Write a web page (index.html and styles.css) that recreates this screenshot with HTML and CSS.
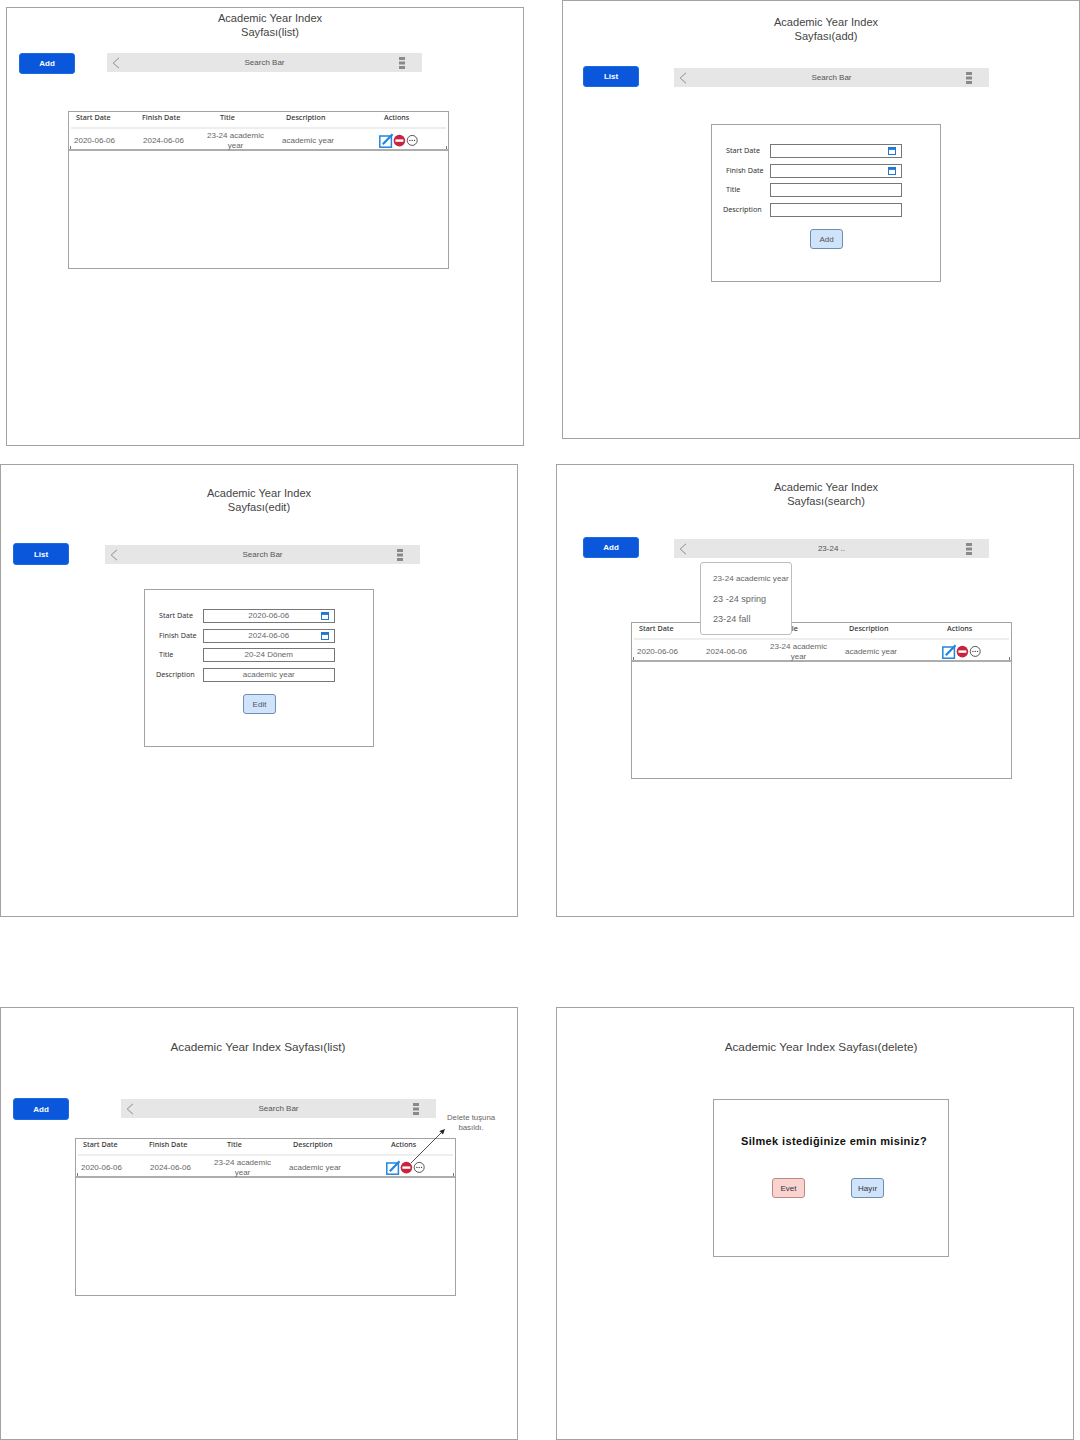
FILE: index.html
```html
<!DOCTYPE html>
<html lang="en">
<head>
    <meta charset="UTF-8">
    <meta name="viewport" content="width=device-width, initial-scale=1.0">
    <title>Academic Year Index</title>
    <link rel="stylesheet" href="styles.css">
</head>
<body>

    <svg class="sprites" width="0" height="0">
        <symbol id="icon-actions" viewBox="0 0 40 15">
            <rect x="0.8" y="3" width="11.6" height="11.2" fill="#fff" stroke="#1f86e0" stroke-width="1.5"/>
            <path d="M3.8 11.2 L13.6 1.2" stroke="#1f86e0" stroke-width="2.2" fill="none"/>
            <circle cx="20.4" cy="7.6" r="5.8" fill="#c9243f"/>
            <rect x="16.4" y="6.4" width="8" height="2.4" fill="#fff"/>
            <circle cx="33.2" cy="7.4" r="5" fill="#fff" stroke="#444" stroke-width="0.9"/>
            <circle cx="30.9" cy="7.4" r="0.7" fill="#444"/>
            <circle cx="33.2" cy="7.4" r="0.7" fill="#444"/>
            <circle cx="35.5" cy="7.4" r="0.7" fill="#444"/>
        </symbol>
        <symbol id="icon-calendar" viewBox="0 0 8 8">
            <rect x="0.5" y="0.5" width="7" height="7" fill="#fff" stroke="#1f78d8"/>
            <rect x="0.5" y="0.5" width="7" height="2.4" fill="#1f78d8"/>
        </symbol>
        <symbol id="icon-back" viewBox="0 0 8 12">
            <path d="M7 0.8 L1.2 6 L7 11.2" fill="none" stroke="#8c8c8c" stroke-width="1"/>
        </symbol>
        <symbol id="icon-kebab" viewBox="0 0 6 12">
            <rect width="6" height="3" fill="#8a8a8a"/>
            <rect y="4.5" width="6" height="3" fill="#8a8a8a"/>
            <rect y="9" width="6" height="3" fill="#8a8a8a"/>
        </symbol>
    </svg>

    <div class="canvas">

        <section class="frame frame-list">
            <h2 class="title">Academic Year Index<br>Sayfası(list)</h2>
            <div class="toolbar">
                <button class="btn-main">Add</button>
                <div class="search-bar">
                    <svg class="icon-back"><use href="#icon-back"/></svg>
                    <span>Search Bar</span>
                    <svg class="icon-kebab"><use href="#icon-kebab"/></svg>
                </div>
            </div>
            <div class="panel table-panel">
                <div class="table-head">
                    <span>Start Date</span><span>Finish Date</span><span>Title</span><span>Description</span><span>Actions</span>
                </div>
                <div class="table-row">
                    <span>2020-06-06</span>
                    <span>2024-06-06</span>
                    <span class="cell-title">23-24 academic year</span>
                    <span>academic year</span>
                    <svg class="icon-actions"><use href="#icon-actions"/></svg>
                </div>
            </div>
        </section>

        <section class="frame frame-add">
            <h2 class="title">Academic Year Index<br>Sayfası(add)</h2>
            <div class="toolbar">
                <button class="btn-main">List</button>
                <div class="search-bar">
                    <svg class="icon-back"><use href="#icon-back"/></svg>
                    <span>Search Bar</span>
                    <svg class="icon-kebab"><use href="#icon-kebab"/></svg>
                </div>
            </div>
            <div class="panel form-panel">
                <div class="form-row">
                    <label>Start Date</label>
                    <div class="field"><svg class="icon-calendar"><use href="#icon-calendar"/></svg></div>
                </div>
                <div class="form-row">
                    <label>Finish Date</label>
                    <div class="field"><svg class="icon-calendar"><use href="#icon-calendar"/></svg></div>
                </div>
                <div class="form-row">
                    <label>Title</label>
                    <div class="field"></div>
                </div>
                <div class="form-row">
                    <label class="label-wide">Description</label>
                    <div class="field"></div>
                </div>
                <button class="btn-light form-btn">Add</button>
            </div>
        </section>

        <section class="frame frame-edit">
            <h2 class="title">Academic Year Index<br>Sayfası(edit)</h2>
            <div class="toolbar">
                <button class="btn-main">List</button>
                <div class="search-bar">
                    <svg class="icon-back"><use href="#icon-back"/></svg>
                    <span>Search Bar</span>
                    <svg class="icon-kebab"><use href="#icon-kebab"/></svg>
                </div>
            </div>
            <div class="panel form-panel">
                <div class="form-row">
                    <label>Start Date</label>
                    <div class="field">2020-06-06<svg class="icon-calendar"><use href="#icon-calendar"/></svg></div>
                </div>
                <div class="form-row">
                    <label>Finish Date</label>
                    <div class="field">2024-06-06<svg class="icon-calendar"><use href="#icon-calendar"/></svg></div>
                </div>
                <div class="form-row">
                    <label>Title</label>
                    <div class="field">20-24 Dönem</div>
                </div>
                <div class="form-row">
                    <label class="label-wide">Description</label>
                    <div class="field">academic year</div>
                </div>
                <button class="btn-light form-btn">Edit</button>
            </div>
        </section>

        <section class="frame frame-search">
            <h2 class="title">Academic Year Index<br>Sayfası(search)</h2>
            <div class="toolbar">
                <button class="btn-main">Add</button>
                <div class="search-bar">
                    <svg class="icon-back"><use href="#icon-back"/></svg>
                    <span>23-24 ..</span>
                    <svg class="icon-kebab"><use href="#icon-kebab"/></svg>
                </div>
            </div>
            <div class="panel table-panel">
                <div class="table-head">
                    <span>Start Date</span><span>Finish Date</span><span>Title</span><span>Description</span><span>Actions</span>
                </div>
                <div class="table-row">
                    <span>2020-06-06</span>
                    <span>2024-06-06</span>
                    <span class="cell-title">23-24 academic year</span>
                    <span>academic year</span>
                    <svg class="icon-actions"><use href="#icon-actions"/></svg>
                </div>
            </div>
            <ul class="dropdown">
                <li class="dropdown-first">23-24 academic year</li>
                <li>23 -24 spring</li>
                <li>23-24 fall</li>
            </ul>
        </section>

        <section class="frame frame-pressed">
            <h2 class="title">Academic Year Index Sayfası(list)</h2>
            <div class="toolbar">
                <button class="btn-main">Add</button>
                <div class="search-bar">
                    <svg class="icon-back"><use href="#icon-back"/></svg>
                    <span>Search Bar</span>
                    <svg class="icon-kebab"><use href="#icon-kebab"/></svg>
                </div>
            </div>
            <div class="panel table-panel">
                <div class="table-head">
                    <span>Start Date</span><span>Finish Date</span><span>Title</span><span>Description</span><span>Actions</span>
                </div>
                <div class="table-row">
                    <span>2020-06-06</span>
                    <span>2024-06-06</span>
                    <span class="cell-title">23-24 academic year</span>
                    <span>academic year</span>
                    <svg class="icon-actions"><use href="#icon-actions"/></svg>
                </div>
            </div>
            <p class="note">Delete tuşuna basıldı.</p>
            <svg class="note-arrow" width="40" height="40" viewBox="0 0 40 40">
                <path d="M1 36 L31 6" stroke="#222" stroke-width="0.8" fill="none"/>
                <path d="M35 2 L33 7.6 L29.4 4 Z" fill="#222"/>
            </svg>
        </section>

        <section class="frame frame-delete">
            <h2 class="title">Academic Year Index Sayfası(delete)</h2>
            <div class="panel dialog">
                <p class="dialog-text">Silmek istediğinize emin misiniz?</p>
                <div class="dialog-actions">
                    <button class="btn-light btn-red">Evet</button>
                    <button class="btn-light">Hayır</button>
                </div>
            </div>
        </section>

    </div>

</body>
</html>
```

FILE: styles.css
```css
* {
    box-sizing: border-box;
}

body {
    margin: 0;
    background-color: #fff;
    font-family: "Liberation Sans", Arial, sans-serif;
}

.sprites {
    position: absolute;
}

.canvas {
    position: relative;
    width: 1080px;
    height: 1440px;
    overflow: hidden;
}

/* the six wireframes sit freely on the canvas */
.frame {
    position: absolute;
    width: 518px;
    border: 1px solid #a3a3a3;
    background-color: #fff;
}

.frame-list { left: 6px; top: 7px; height: 439px; }
.frame-add { left: 562px; top: 0; height: 439px; }
.frame-edit { left: 0; top: 464px; height: 453px; }
.frame-search { left: 556px; top: 464px; height: 453px; }
.frame-pressed { left: 0; top: 1007px; height: 433px; }
.frame-delete { left: 556px; top: 1007px; height: 433px; }

.title {
    margin: 0;
    font-size: 11.1px;
    font-weight: 400;
    line-height: 14px;
    color: #444;
    text-align: center;
}

.frame-list .title { padding: 3px 0 0 10px; }
.frame-add .title { padding: 14px 0 0 10px; }
.frame-edit .title { padding: 21px 0 0; }
.frame-search .title { padding: 15px 0 0 22px; }
.frame-pressed .title { padding: 32px 2px 0 0; font-size: 11.75px; }
.frame-delete .title { padding: 32px 0 0 12px; font-size: 11.75px; }

.toolbar {
    display: flex;
    align-items: flex-start;
}

.frame-list .toolbar { margin-top: 14px; padding-left: 12px; gap: 32px; }
.frame-add .toolbar { margin-top: 23px; padding-left: 20px; gap: 35px; }
.frame-edit .toolbar { margin-top: 29px; padding-left: 12px; gap: 36px; }
.frame-search .toolbar { margin-top: 29px; padding-left: 26px; gap: 35px; }
.frame-pressed .toolbar { margin-top: 44px; padding-left: 12px; gap: 52px; }

.btn-main {
    width: 56px;
    height: 21px;
    padding: 0;
    border: 1px solid #1c6be0;
    border-radius: 3px;
    background-color: #0a57dc;
    color: #fff;
    font-family: inherit;
    font-size: 8px;
    font-weight: 700;
}

.frame-edit .btn-main,
.frame-pressed .btn-main {
    height: 22px;
}

.search-bar {
    display: grid;
    grid-template-columns: 1fr auto 1fr;
    align-items: center;
    width: 315px;
    height: 19px;
    margin-top: 2px;
    padding: 0 5px;
    background-color: #e6e6e6;
    color: #555;
    font-size: 8px;
}

.frame-list .search-bar { margin-top: 0; }
.frame-pressed .search-bar { margin-top: 1px; }

.icon-back {
    width: 8px;
    height: 12px;
}

.icon-kebab {
    justify-self: end;
    width: 6px;
    height: 12px;
    margin-right: 12px;
}

.panel {
    border: 1px solid #a3a3a3;
    background-color: #fff;
}

.table-panel {
    width: 381px;
    height: 158px;
}

.frame-list .table-panel { margin: 37px 0 0 61px; }
.frame-search .table-panel { margin: 64px 0 0 74px; height: 157px; }
.frame-pressed .table-panel { margin: 18px 0 0 74px; }

.table-head {
    display: grid;
    grid-template-columns: 66px 78px 66px 98px 50px;
    height: 17px;
    margin: 0 2px;
    padding-left: 5px;
    border-bottom: 2px solid #eeeeee;
    font-family: "Noto Sans", sans-serif;
    font-size: 7.2px;
    font-weight: 500;
    line-height: 11px;
    color: #333;
    white-space: nowrap;
}

.table-row {
    position: relative;
    display: grid;
    grid-template-columns: 69px 61px 78px 97px 40px;
    align-items: center;
    height: 22px;
    padding: 2px 0 0 5px;
    border-bottom: 2px solid #adadad;
    font-size: 8px;
    line-height: 10px;
    color: #666;
    white-space: nowrap;
}

/* little end ticks on the selected row */
.table-row::before,
.table-row::after {
    content: "";
    position: absolute;
    bottom: 0;
    width: 1px;
    height: 3px;
    background-color: #777;
}

.table-row::before { left: 1px; }
.table-row::after { right: 1px; }

.cell-title {
    width: 63px;
    text-align: center;
    white-space: normal;
}

.icon-actions {
    width: 40px;
    height: 15px;
    margin-top: -1px;
}

.form-panel {
    width: 230px;
    height: 158px;
    padding: 19px 0 0 14px;
}

.frame-add .form-panel { margin: 37px 0 0 148px; }
.frame-edit .form-panel { margin: 24px 0 0 143px; }

.form-row {
    display: flex;
    align-items: center;
    height: 14px;
    margin-bottom: 5.7px;
}

.form-row label {
    width: 44px;
    padding-bottom: 2px;
    font-family: "Noto Sans", sans-serif;
    font-size: 7.2px;
    color: #333;
    white-space: nowrap;
}

.form-row .label-wide {
    width: 47px;
    margin-left: -3px;
}

.field {
    position: relative;
    width: 131.5px;
    height: 14px;
    border: 1px solid #777;
    font-size: 8px;
    line-height: 11px;
    color: #666;
    text-align: center;
}

.icon-calendar {
    position: absolute;
    top: 2px;
    right: 5px;
    width: 8px;
    height: 8px;
}

.btn-light {
    width: 33px;
    height: 20px;
    padding: 0;
    border: 1px solid #6f8fae;
    border-radius: 3px;
    background-color: #cfe3fb;
    color: #555;
    font-family: inherit;
    font-size: 8px;
}

.form-btn {
    display: block;
    margin: 12px 0 0 84px;
}

.dropdown {
    position: absolute;
    left: 143px;
    top: 97px;
    width: 92px;
    height: 73px;
    margin: 0;
    padding: 6px 0 0 12px;
    list-style: none;
    border: 1px solid #bdbdbd;
    border-radius: 3px;
    background-color: #fff;
    font-size: 9.1px;
    line-height: 20px;
    color: #666;
    white-space: nowrap;
}

.dropdown .dropdown-first {
    font-size: 8.1px;
}

.note {
    position: absolute;
    left: 444px;
    top: 105px;
    width: 52px;
    margin: 0;
    font-size: 7.8px;
    line-height: 10px;
    color: #666;
    text-align: center;
}

.note-arrow {
    position: absolute;
    left: 409px;
    top: 119px;
}

.dialog {
    width: 236px;
    height: 158px;
    margin: 45px 0 0 156px;
    padding-top: 34px;
}

.dialog-text {
    margin: 0;
    padding-left: 6px;
    font-size: 11px;
    font-weight: 700;
    line-height: 14px;
    letter-spacing: 0.36px;
    color: #111;
    text-align: center;
}

.dialog-actions {
    display: flex;
    gap: 46px;
    margin-top: 30px;
    padding-left: 58px;
}

.dialog-actions .btn-light {
    color: #333;
    font-weight: 500;
}

.btn-red {
    border-color: #c08683;
    background-color: #f8d3d0;
}
```
